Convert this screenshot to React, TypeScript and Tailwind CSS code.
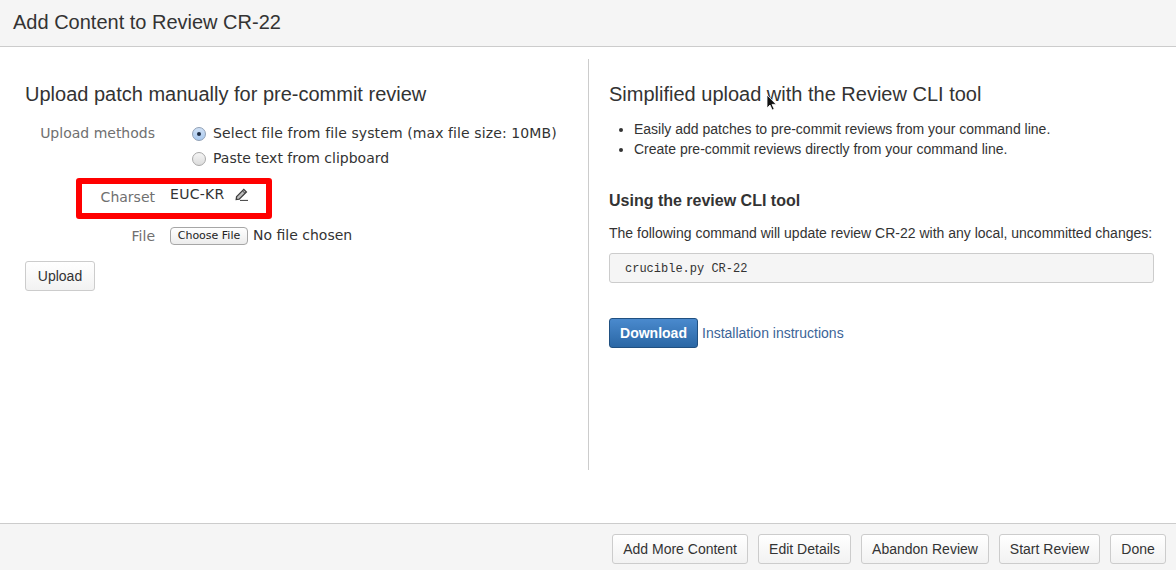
const sans = "font-['Liberation_Sans',Arial,sans-serif]";
const lucida = "font-['DejaVu_Sans',sans-serif]";

function Btn({ label, w }: { label: string; w: string }) {
  return (
    <button className={`${w} h-[30px] rounded-[3px] border border-[#cccccc] bg-gradient-to-b from-white to-[#f2f2f2] text-[14px] text-[#333333] flex items-center justify-center`}>
      {label}
    </button>
  );
}

function Cursor() {
  return (
    <svg className="absolute left-[766px] top-[94px]" width="12" height="18" viewBox="0 0 12 18">
      <path d="M1 1v13l3-3 2.2 5 2-.9L6 10.4h4.2z" fill="#111" stroke="#fff" strokeWidth="0.8" />
    </svg>
  );
}

export default function App() {
  return (
    <div className={`relative w-[1176px] h-[570px] flex flex-col bg-white overflow-hidden text-[#333333] ${sans}`}>
      <header className="h-[47px] shrink-0 bg-[#f5f5f5] border-b border-[#cccccc] pl-[13px] pt-[9px]">
        <h1 className="text-[20px] leading-[26px] font-normal">Add Content to Review CR-22</h1>
      </header>

      <main className="flex-1 flex pt-[12px] pb-[53px]">
        <section className="w-[589px] shrink-0 border-r border-[#cccccc] pl-[25px] pt-[22px]">
          <h2 className="text-[20px] leading-[26px] font-normal">Upload patch manually for pre-commit review</h2>
          <div className={`${lucida} text-[14px]`}>
            <div className="flex mt-[14px]">
              <div className="w-[130px] text-right text-[#707070] leading-[25px] whitespace-nowrap">Upload methods</div>
              <div className="ml-[37px]">
                <div className="flex items-center h-[25px] gap-[7px] text-[#333333]">
                  <span className="w-[14px] h-[14px] rounded-full border border-[#8f9fb5] bg-gradient-to-b from-[#cfe0f5] to-[#a9c9ef] flex items-center justify-center">
                    <span className="w-[4px] h-[4px] rounded-full bg-[#1c2c44]" />
                  </span>
                  <span className="whitespace-nowrap tracking-[0.1px]">Select file from file system (max file size: 10MB)</span>
                </div>
                <div className="flex items-center h-[25px] gap-[7px] text-[#333333]">
                  <span className="w-[14px] h-[14px] rounded-full border border-[#a8a8a8] bg-gradient-to-b from-[#f5f5f5] to-[#dcdcdc]" />
                  <span className="whitespace-nowrap">Paste text from clipboard</span>
                </div>
              </div>
            </div>

            <div className="mt-[7px] ml-[51px] w-[196px] h-[41px] rounded-[3px] border-[6px] border-[#ff0000] flex">
              <div className="w-[73px] text-right text-[#707070] leading-[25px] pt-[1px]">Charset</div>
              <div className="ml-[15px] leading-[20px] flex items-start text-[#333333]">
                <span className="tracking-[0.3px]">EUC-KR</span>
                <svg className="ml-[10px] mt-[4px]" width="13" height="13" viewBox="0 0 13 13" fill="none">
                  <path d="M1.6 8.6 8.8 1.4l2.6 2.6-7.2 7.2-3 .4z" fill="#bdbdbd" stroke="#3d3d3d" strokeWidth="1.3" />
                  <path d="M7.4 2.8l2.6 2.6" stroke="#3d3d3d" strokeWidth="1" />
                  <path d="M5 12.4h8" stroke="#3d3d3d" strokeWidth="1" />
                </svg>
              </div>
            </div>

            <div className="flex items-start mt-[5px] h-[24px]">
              <div className="w-[130px] text-right text-[#707070] leading-[25px]">File</div>
              <button className="ml-[15px] mt-[3px] w-[78px] h-[18px] rounded-[4px] border border-[#a6a6a6] bg-gradient-to-b from-white to-[#ececec] text-[11px] text-[#222222] flex items-center justify-center whitespace-nowrap">
                Choose File
              </button>
              <span className="ml-[5px] leading-[22px] text-[#333333]">No file chosen</span>
            </div>
          </div>
          <button className="mt-[13px] w-[70px] h-[30px] rounded-[3px] border border-[#cccccc] bg-gradient-to-b from-white to-[#f2f2f2] text-[14px] text-[#333333] flex items-center justify-center">
            Upload
          </button>
        </section>

        <section className="flex-1 pl-[20px] pr-[22px] pt-[22px]">
          <h2 className="text-[20px] leading-[26px] font-normal">Simplified upload with the Review CLI tool</h2>
          <ul className="mt-[12px] ml-[25px] list-disc text-[14px] leading-[20px]">
            <li>Easily add patches to pre-commit reviews from your command line.</li>
            <li>Create pre-commit reviews directly from your command line.</li>
          </ul>
          <h3 className="mt-[30px] text-[16px] leading-[24px] font-bold">Using the review CLI tool</h3>
          <p className="mt-[10px] text-[14px] leading-[20px] whitespace-nowrap">The following command will update review CR-22 with any local, uncommitted changes:</p>
          <pre className="mt-[10px] h-[30px] rounded-[3px] border border-[#cccccc] bg-[#f5f5f5] pl-[15px] font-['Liberation_Mono',monospace] text-[12px] leading-[30px]">crucible.py CR-22</pre>
          <div className="mt-[35px] flex items-center">
            <button className="w-[89px] h-[30px] rounded-[3px] border border-[#205081] bg-gradient-to-b from-[#4a8ace] to-[#2a67a5] text-[14px] font-bold text-white flex items-center justify-center">
              Download
            </button>
            <a className="ml-[4px] text-[14px] text-[#3b6497]">Installation instructions</a>
          </div>
        </section>
      </main>

      <footer className="h-[47px] shrink-0 bg-[#f5f5f5] border-t border-[#cccccc] pt-[10px] pr-[10px] flex justify-end gap-[10px]">
        <Btn label="Add More Content" w="w-[136px]" />
        <Btn label="Edit Details" w="w-[93px]" />
        <Btn label="Abandon Review" w="w-[128px]" />
        <Btn label="Start Review" w="w-[101px]" />
        <Btn label="Done" w="w-[56px]" />
      </footer>
      <Cursor />
    </div>
  );
}
